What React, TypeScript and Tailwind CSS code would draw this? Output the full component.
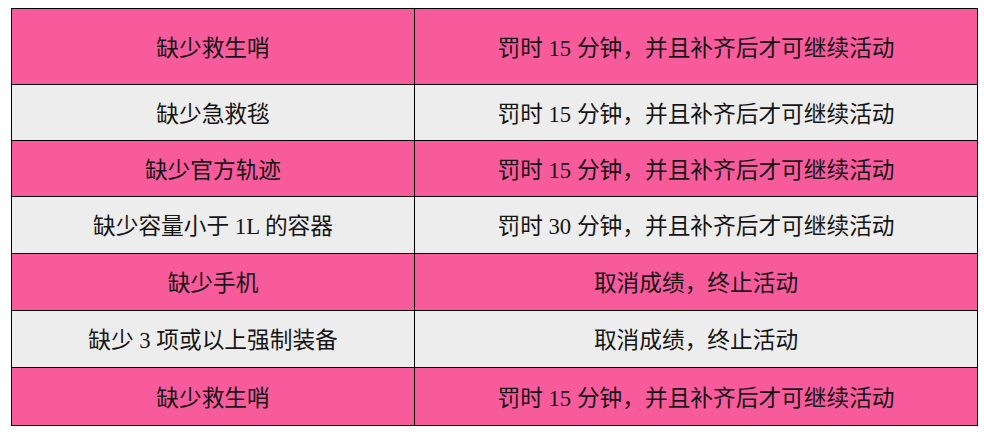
import React from "react";

const rows: { a: string; b: string; h: string; pink: boolean }[] = [
  { a: "缺少救生哨", b: "罚时 15 分钟，并且补齐后才可继续活动", h: "h-[76px]", pink: true },
  { a: "缺少急救毯", b: "罚时 15 分钟，并且补齐后才可继续活动", h: "h-[56px]", pink: false },
  { a: "缺少官方轨迹", b: "罚时 15 分钟，并且补齐后才可继续活动", h: "h-[56px]", pink: true },
  { a: "缺少容量小于 1L 的容器", b: "罚时 30 分钟，并且补齐后才可继续活动", h: "h-[57px]", pink: false },
  { a: "缺少手机", b: "取消成绩，终止活动", h: "h-[57px]", pink: true },
  { a: "缺少 3 项或以上强制装备", b: "取消成绩，终止活动", h: "h-[57px]", pink: false },
  { a: "缺少救生哨", b: "罚时 15 分钟，并且补齐后才可继续活动", h: "h-[58px]", pink: true },
];

export default function App() {
  return (
    <div
      className="w-[984px] h-[438px] bg-white pt-[8px] pl-[11px]"
      style={{ fontFamily: '"Liberation Serif", "Noto Sans CJK SC", serif' }}
    >
      <div className="w-[967px] border-b border-black">
        {rows.map((r, i) => (
          <div
            key={i}
            className={`flex ${r.h} border-t border-l border-r border-black text-[22.7px] text-[#151515] ${
              r.pink ? "bg-[#f85b9c]" : "bg-[#ededed]"
            }`}
          >
            <div className="w-[403px] shrink-0 border-r border-black flex items-center justify-center pt-[5px]">
              {r.a}
            </div>
            <div className="flex-1 flex items-center justify-center pt-[5px]">{r.b}</div>
          </div>
        ))}
      </div>
    </div>
  );
}
